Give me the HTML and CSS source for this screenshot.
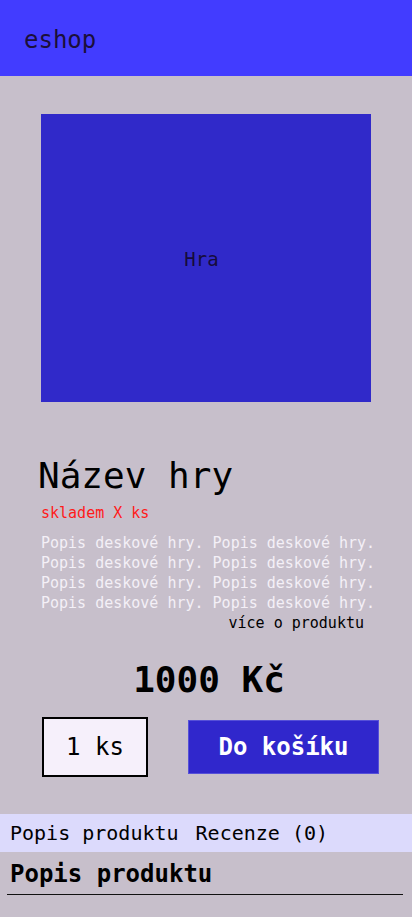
FILE: index.html
```html
<!DOCTYPE html>
<html lang="cs">
<head>
<meta charset="utf-8">
<title>eshop</title>
<link rel="stylesheet" href="styles.css">
</head>
<body>
<header class="topbar"><span class="brand">eshop</span></header>
<main class="product">
  <div class="product-image"><span class="image-label">Hra</span></div>
  <h1 class="product-name">Název hry</h1>
  <p class="stock">skladem X ks</p>
  <p class="desc">Popis deskové hry. Popis deskové hry. Popis deskové hry. Popis deskové hry. Popis deskové hry. Popis deskové hry. Popis deskové hry. Popis deskové hry.</p>
  <a class="more">více o produktu</a>
  <div class="price">1000 Kč</div>
  <div class="buy-row">
    <div class="qty">1 ks</div>
    <button class="add-cart">Do košíku</button>
  </div>
</main>
<nav class="tabs">
  <span class="tab">Popis produktu</span>
  <span class="tab">Recenze (0)</span>
</nav>
<section class="details">
  <h2 class="details-title">Popis produktu</h2>
  <div class="rule"></div>
</section>
</body>
</html>
```
FILE: styles.css
```css
html, body {
  margin: 0;
  padding: 0;
}
body {
  background: #c7bfcb;
  font-family: "DejaVu Sans Mono", "Liberation Mono", monospace;
  color: #000;
}
.topbar {
  height: 76px;
  background: #423cff;
  display: flex;
  align-items: center;
  padding-left: 24px;
}
.brand {
  font-size: 24px;
  color: #1b0f3a;
  line-height: 28px;
  margin-top: 4px;
}
.product {
  display: flex;
  flex-direction: column;
  padding: 38px 41px 0;
}
.product-image {
  width: 330px;
  height: 288px;
  background: #3029c9;
  display: flex;
  align-items: center;
  justify-content: center;
  font-size: 19px;
  color: #160c3c;
}
.image-label {
  margin-right: 9px;
  margin-top: 2px;
}
.product-name {
  margin: 53px 0 0 -3px;
  font-size: 36px;
  font-weight: normal;
  line-height: 42px;
  color: #000;
}
.stock {
  margin: 6px 0 0;
  font-size: 15px;
  line-height: 20px;
  color: #ff1a1a;
}
.desc {
  margin: 10px 0 0;
  width: 340px;
  font-size: 15px;
  line-height: 20px;
  color: #f4f0f7;
}
.more {
  align-self: flex-end;
  margin-right: 7px;
  font-size: 15px;
  line-height: 20px;
  color: #000;
}
.price {
  margin-top: 26px;
  margin-left: 6px;
  align-self: center;
  font-size: 36px;
  font-weight: bold;
  line-height: 42px;
}
.buy-row {
  margin-top: 16px;
  display: flex;
  align-items: center;
  gap: 40px;
  padding-left: 1px;
}
.qty {
  flex-shrink: 0;
  box-sizing: border-box;
  width: 106px;
  height: 60px;
  border: 2px solid #000;
  background: #f6f0fb;
  display: flex;
  align-items: center;
  justify-content: center;
  font-size: 24px;
  color: #000;
}
.add-cart {
  flex-shrink: 0;
  box-sizing: border-box;
  width: 191px;
  height: 54px;
  background: #3027cc;
  border: 1px solid #5650d8;
  color: #fff;
  font-family: inherit;
  font-size: 24px;
  font-weight: bold;
  padding: 0;
}
.tabs {
  margin-top: 37px;
  height: 38px;
  background: #dcdafc;
  display: flex;
  align-items: center;
  gap: 17px;
  padding-left: 10px;
}
.tab {
  font-size: 20px;
  line-height: 24px;
  color: #000;
}
.details {
  padding: 0 9px 0 7px;
}
.details-title {
  margin: 8px 0 0 3px;
  font-size: 24px;
  font-weight: bold;
  line-height: 28px;
}
.rule {
  margin-top: 6px;
  height: 1px;
  background: #111;
}
```
